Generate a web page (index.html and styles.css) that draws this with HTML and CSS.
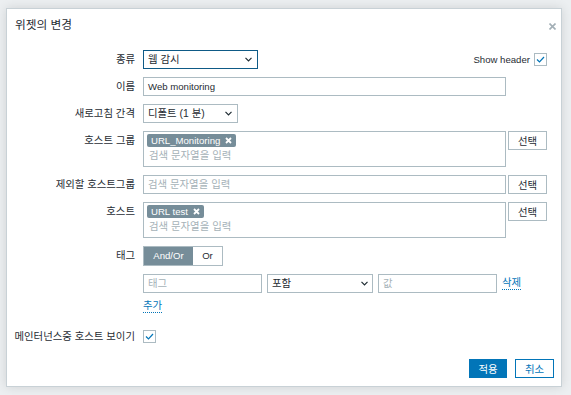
FILE: index.html
```html
<!DOCTYPE html>
<html lang="ko">
<head>
  <meta charset="UTF-8" />
  <meta name="viewport" content="width=device-width, initial-scale=1.0"/>
  <title>위젯의 변경</title>
  <link rel="stylesheet" href="styles.css">
</head>
<body>
  <div class="overlay">
    <div class="dialog">
      <!-- Cabecera -->
      <div class="dialog-head">
        <h4>위젯의 변경</h4>
        <button class="close" title="닫기">
          <svg width="7" height="7" viewBox="0 0 7 7"><path d="M0.5 0.5 L6.5 6.5 M6.5 0.5 L0.5 6.5" stroke="#a3afb6" stroke-width="1.6"/></svg>
        </button>
      </div>

      <div class="dialog-body">
        <div class="form-row">
          <label>종류</label>
          <div class="field field-inline">
            <div class="select select-type focused">
              <span class="ko">웹 감시</span>
              <svg width="7" height="5" viewBox="0 0 7 5"><path d="M0.5 0.8 L3.5 3.8 L6.5 0.8" fill="none" stroke="#1f2c33" stroke-width="1.2"/></svg>
            </div>
            <div class="show-header">
              <span>Show header</span>
              <span class="checkbox checked"><svg width="11" height="11" viewBox="0 0 11 11"><path d="M2 5.5 L4.5 8 L9 3" fill="none" stroke="#0275b8" stroke-width="1.2"/></svg></span>
            </div>
          </div>
        </div>

        <div class="form-row">
          <label>이름</label>
          <div class="field">
            <div class="input input-name">Web monitoring</div>
          </div>
        </div>

        <div class="form-row">
          <label>새로고침 간격</label>
          <div class="field">
            <div class="select select-refresh">
              <span class="ko">디폴트 (1 분)</span>
              <svg width="7" height="5" viewBox="0 0 7 5"><path d="M0.5 0.8 L3.5 3.8 L6.5 0.8" fill="none" stroke="#1f2c33" stroke-width="1.2"/></svg>
            </div>
          </div>
        </div>

        <div class="form-row">
          <label>호스트 그룹</label>
          <div class="field with-btn">
            <div class="multiselect">
              <div class="chips">
                <span class="chip">URL_Monitoring <svg width="7" height="7" viewBox="0 0 7 7"><path d="M1 1 L6 6 M6 1 L1 6" stroke="#fff" stroke-width="1.8"/></svg></span>
              </div>
              <div class="placeholder">검색 문자열을 입력</div>
            </div>
            <button class="btn-grey">선택</button>
          </div>
        </div>

        <div class="form-row">
          <label>제외할 호스트그룹</label>
          <div class="field with-btn">
            <div class="input input-wide placeholder-text ko">검색 문자열을 입력</div>
            <button class="btn-grey">선택</button>
          </div>
        </div>

        <div class="form-row">
          <label>호스트</label>
          <div class="field with-btn">
            <div class="multiselect">
              <div class="chips">
                <span class="chip">URL test <svg width="7" height="7" viewBox="0 0 7 7"><path d="M1 1 L6 6 M6 1 L1 6" stroke="#fff" stroke-width="1.8"/></svg></span>
              </div>
              <div class="placeholder">검색 문자열을 입력</div>
            </div>
            <button class="btn-grey">선택</button>
          </div>
        </div>

        <div class="form-row">
          <label class="label-tags">태그</label>
          <div class="field">
            <div class="segmented">
              <span class="seg seg-active">And/Or</span>
              <span class="seg seg-or">Or</span>
            </div>
            <div class="tag-row">
              <div class="input input-tag placeholder-text ko">태그</div>
              <div class="select select-op">
                <span class="ko">포함</span>
                <svg width="7" height="5" viewBox="0 0 7 5"><path d="M0.5 0.8 L3.5 3.8 L6.5 0.8" fill="none" stroke="#1f2c33" stroke-width="1.2"/></svg>
              </div>
              <div class="input input-tag placeholder-text ko">값</div>
              <a class="link">삭제</a>
            </div>
            <div class="add-row"><a class="link">추가</a></div>
          </div>
        </div>

        <div class="form-row">
          <label>메인터넌스중 호스트 보이기</label>
          <div class="field field-check">
            <span class="checkbox checked"><svg width="11" height="11" viewBox="0 0 11 11"><path d="M2 5.5 L4.5 8 L9 3" fill="none" stroke="#0275b8" stroke-width="1.2"/></svg></span>
          </div>
        </div>
      </div>

      <!-- Pie del diálogo -->
      <div class="dialog-foot">
        <button class="btn-primary">적용</button>
        <button class="btn-alt">취소</button>
      </div>
    </div>
  </div>
</body>
</html>
```

FILE: styles.css
```css
/* Reset general */
* {
  box-sizing: border-box;
  margin: 0;
  padding: 0;
}

body {
  width: 571px;
  height: 395px;
  overflow: hidden;
  background-color: #eceff1;
  color: #1f2c33;
  font-family: "Liberation Sans", "Noto Sans CJK KR", sans-serif;
  font-size: 9.6px;
}

button {
  font-family: inherit;
  font-size: 10.4px;
  cursor: pointer;
}

/* Texto coreano algo más grande */
.ko {
  font-size: 10.4px;
}

/* Fondo y diálogo */
.overlay {
  padding: 8px 0 0 6px;
}

.dialog {
  width: 556px;
  height: 379px;
  background-color: #fff;
  border: 1px solid #c8d1d6;
  box-shadow: 0 0 10px rgba(0, 0, 0, 0.12);
  display: flex;
  flex-direction: column;
}

.dialog-head {
  height: 41px;
  padding: 9px 5px 0 8px;
  display: flex;
  justify-content: space-between;
  align-items: flex-start;
}

.dialog-head h4 {
  font-size: 11.7px;
  font-weight: normal;
  line-height: 14px;
}

.close {
  border: none;
  background: none;
  margin-top: 5px;
  width: 7px;
  height: 7px;
  display: flex;
}

.dialog-body {
  flex: 1;
  padding: 0 13px 0 6px;
}

/* Filas del formulario */
.form-row {
  display: grid;
  grid-template-columns: 122px 404px;
  column-gap: 8px;
  margin-bottom: 8px;
}

.form-row label {
  text-align: right;
  line-height: 19px;
  white-space: nowrap;
  font-size: 10.4px;
}

.form-row .label-tags {
  line-height: 20px;
}

.field-inline {
  display: flex;
  align-items: center;
}

.field-check {
  display: flex;
  align-items: center;
  height: 19px;
}

.with-btn {
  display: flex;
  gap: 2px;
  align-items: flex-start;
}

/* Entradas */
.input,
.select {
  height: 19px;
  border: 1px solid #acbbc2;
  background-color: #fff;
  padding: 0 4px;
  line-height: 17px;
  white-space: nowrap;
}

.placeholder-text {
  color: #a6b2b8;
}

.input-name {
  width: 363px;
}

.input-wide {
  width: 363px;
}

.select {
  display: flex;
  justify-content: space-between;
  align-items: center;
  padding-right: 5px;
}

.select.focused {
  border-color: #0e5a86;
}

.select-type {
  width: 115px;
}

.select-refresh {
  width: 95px;
}

.select-op {
  width: 106px;
  padding-right: 4px;
}

.show-header {
  margin-left: auto;
  display: flex;
  align-items: center;
  gap: 4px;
}

.checkbox {
  width: 13px;
  height: 13px;
  border: 1px solid #acbbc2;
  background-color: #fff;
  display: flex;
  align-items: center;
  justify-content: center;
}

/* Multiselect */
.multiselect {
  width: 363px;
  height: 36px;
  border: 1px solid #acbbc2;
  padding: 2px 3px 0;
}

.chips {
  display: flex;
  height: 13px;
}

.chip {
  display: flex;
  align-items: center;
  gap: 5px;
  height: 13px;
  padding: 0 4px;
  background-color: #768d99;
  color: #fff;
  border-radius: 2px;
  line-height: 13px;
}

.placeholder {
  padding-left: 2px;
  line-height: 18px;
  font-size: 10.4px;
  color: #a6b2b8;
}

.btn-grey {
  width: 39px;
  height: 19px;
  border: 1px solid #acbbc2;
  background-color: #fff;
  color: #1f2c33;
}

/* Etiquetas */
.segmented {
  display: inline-flex;
  height: 20px;
  border: 1px solid #acbbc2;
  margin-bottom: 8px;
}

.seg {
  line-height: 18px;
  text-align: center;
}

.seg-active {
  width: 49px;
  background-color: #768d99;
  color: #fff;
}

.seg-or {
  width: 29px;
}

.tag-row {
  display: flex;
  align-items: center;
  gap: 5px;
}

.input-tag {
  width: 119px;
}

.link {
  display: inline-block;
  font-size: 10.4px;
  line-height: 12px;
  color: #0275b8;
  border-bottom: 1px dotted #0275b8;
  cursor: pointer;
}

.add-row {
  margin-top: 7px;
  height: 19px;
}

/* Pie */
.dialog-foot {
  display: flex;
  justify-content: flex-end;
  gap: 8px;
  padding: 0 7px 8px 0;
}

.btn-primary {
  width: 38px;
  height: 19px;
  border: 1px solid #0275b8;
  background-color: #0275b8;
  color: #fff;
}

.btn-alt {
  width: 39px;
  height: 19px;
  border: 1px solid #0275b8;
  background-color: #fff;
  color: #0275b8;
}
```
